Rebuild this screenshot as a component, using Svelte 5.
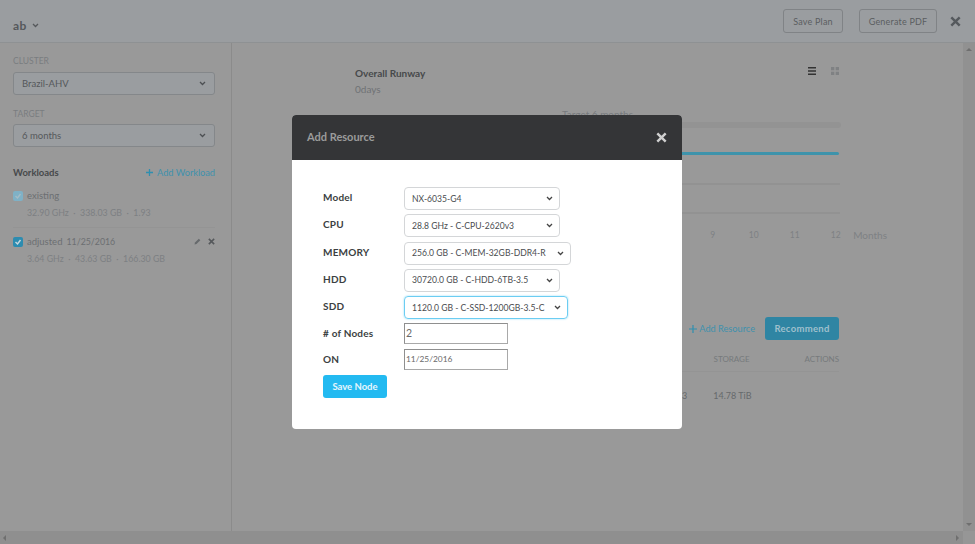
<script>
  const fields = [
    { label: "Model", value: "NX-6035-G4", width: 156 },
    { label: "CPU", value: "28.8 GHz - C-CPU-2620v3", width: 156 },
    { label: "MEMORY", value: "256.0 GB - C-MEM-32GB-DDR4-R", width: 167 },
    { label: "HDD", value: "30720.0 GB - C-HDD-6TB-3.5", width: 156 },
    { label: "SDD", value: "1120.0 GB - C-SSD-1200GB-3.5-C", width: 164, focus: true },
  ];
  const months = [9, 10, 11, 12];
</script>

{#snippet chevron(color)}
  <svg class="chevron" width="7" height="5" viewBox="0 0 7 5">
    <path d="M1 1l2.5 2.5L6 1" fill="none" stroke={color} stroke-width="1.3" />
  </svg>
{/snippet}

{#snippet cross(size, color)}
  <svg width={size} height={size} viewBox="0 0 10 10">
    <path d="M1.2 1.2l7.6 7.6M8.8 1.2L1.2 8.8" fill="none" stroke={color} stroke-width="2.2" />
  </svg>
{/snippet}

<div class="page">
  <div class="window">
    <header class="topbar">
      <div class="plan-name">ab {@render chevron("#55585b")}</div>
      <div class="top-actions">
        <button class="ghost save-plan">Save Plan</button>
        <button class="ghost pdf">Generate PDF</button>
        {@render cross(11, "#55595d")}
      </div>
    </header>

    <div class="body">
      <aside class="sidebar">
        <div class="caption">CLUSTER</div>
        <div class="side-select">Brazil-AHV {@render chevron("#4d5053")}</div>
        <div class="caption second">TARGET</div>
        <div class="side-select">6 months {@render chevron("#4d5053")}</div>

        <div class="workloads-head">
          <span class="workloads-title">Workloads</span>
          <span class="link">
            <svg width="7" height="7" viewBox="0 0 7 7"><path d="M3.5 0v7M0 3.5h7" stroke="#2f8fb0" stroke-width="1.3" /></svg>
            Add Workload
          </span>
        </div>

        <div class="workload first">
          <div class="workload-title">
            <span class="check light">
              <svg width="8" height="8" viewBox="0 0 8 8"><path d="M1.5 4l2 2 3-4" fill="none" stroke="#a5bcc6" stroke-width="1.4" /></svg>
            </span>
            <span>existing</span>
          </div>
          <div class="stats">32.90 GHz &nbsp;·&nbsp; 338.03 GB &nbsp;·&nbsp; 1.93</div>
        </div>
        <div class="workload">
          <div class="workload-title">
            <span class="check">
              <svg width="8" height="8" viewBox="0 0 8 8"><path d="M1.5 4l2 2 3-4" fill="none" stroke="#c9d8de" stroke-width="1.4" /></svg>
            </span>
            <span>adjusted</span>
            <span class="workload-date">11/25/2016</span>
            <span class="row-icons">
              <svg width="7" height="7" viewBox="0 0 7 7"><path d="M0.5 6.5l.5-2L4.8.7l1.5 1.5L2.5 6z" fill="#66696c" /></svg>
              {@render cross(7, "#55585b")}
            </span>
          </div>
          <div class="stats">3.64 GHz &nbsp;·&nbsp; 43.63 GB &nbsp;·&nbsp; 166.30 GB</div>
        </div>
      </aside>

      <main class="content">
        <div class="overview">
          <div>
            <div class="runway-title">Overall Runway</div>
            <div class="runway-value">0days</div>
          </div>
          <div class="view-toggle">
            <svg width="8" height="8" viewBox="0 0 8 8"><path d="M0 0h8v1.6H0zM0 3.2h8v1.6H0zM0 6.4h8V8H0z" fill="#333" /></svg>
            <svg width="8" height="8" viewBox="0 0 8 8"><path d="M0 0h3.3v3.3H0zM4.7 0H8v3.3H4.7zM0 4.7h3.3V8H0zM4.7 4.7H8V8H4.7z" fill="#7f8183" /></svg>
          </div>
        </div>

        <div class="chart">
          <div class="chart-target">Target 6 months</div>
          <div class="band"></div>
          <div class="teal"></div>
          <div class="grid-line"></div>
          <div class="grid-line"></div>
          <div class="axis">
            {#each months as m}<span class="tick">{m}</span>{/each}
            <span class="axis-unit">Months</span>
          </div>
        </div>

        <div class="table-actions">
          <span class="link add-resource">
            <svg width="8" height="8" viewBox="0 0 8 8"><path d="M4 0v8M0 4h8" stroke="#2f8fb0" stroke-width="1.2" /></svg>
            Add Resource
          </span>
          <button class="recommend">Recommend</button>
        </div>
        <div class="table-head"><span class="col-storage">STORAGE</span><span>ACTIONS</span></div>
        <div class="table-row"><span>3</span><span>14.78 TiB</span></div>
      </main>

      <div class="v-scroll">
        <span class="arrow up"></span>
        <span class="arrow down"></span>
      </div>
    </div>

    <div class="h-scroll">
      <div class="h-track">
        <span class="arrow left"></span>
        <span class="arrow right"></span>
      </div>
      <div class="corner"></div>
    </div>
  </div>

  <div class="modal">
    <div class="modal-head">
      <span class="modal-title">Add Resource</span>
      {@render cross(11, "#cfcfcf")}
    </div>
    <div class="modal-body">
      {#each fields as field}
        <div class="field">
          <span class="field-label">{field.label}</span>
          <div class="select" class:focus={field.focus} style="width: {field.width}px">
            <span>{field.value}</span>
            {@render chevron("#444")}
          </div>
        </div>
      {/each}
      <div class="field plain">
        <span class="field-label">&#35; of Nodes</span>
        <input value="2" readonly />
      </div>
      <div class="field plain">
        <span class="field-label">ON</span>
        <input class="date" value="11/25/2016" readonly />
      </div>
      <button class="save-node">Save Node</button>
    </div>
  </div>
</div>

<style>
  :global(body) {
    margin: 0;
    background: #999;
  }

  .page {
    position: relative;
    width: 975px;
    height: 544px;
    overflow: hidden;
    font-family: Lato, "Open Sans", sans-serif;
    font-size: 10px;
    color: #6e7174;
  }

  .window {
    display: flex;
    flex-direction: column;
    height: 100%;
  }

  .topbar {
    flex: none;
    display: flex;
    align-items: center;
    justify-content: space-between;
    height: 43px;
    padding: 0 14px 0 13px;
    box-sizing: border-box;
    background: #9a9da0;
    border-bottom: 1px solid #8e9193;
  }

  .plan-name {
    display: flex;
    align-items: center;
    gap: 5px;
    margin-top: 9px;
    font-size: 12px;
    font-weight: 700;
    letter-spacing: 0.3px;
    color: #55585b;
  }

  .top-actions {
    display: flex;
    align-items: center;
  }

  .ghost {
    height: 24px;
    padding: 0;
    background: transparent;
    border: 1px solid #808386;
    border-radius: 3px;
    font: inherit;
    font-size: 9px;
    letter-spacing: 0.2px;
    color: #5b5e61;
  }

  .save-plan {
    width: 60px;
    margin-right: 16px;
  }

  .pdf {
    width: 78px;
    margin-right: 13px;
  }

  .body {
    flex: 1;
    display: flex;
    min-height: 0;
  }

  .sidebar {
    flex: none;
    width: 232px;
    box-sizing: border-box;
    padding: 13px 16px 0 13px;
    border-right: 1px solid #8b8b8b;
  }

  .caption {
    font-size: 8.5px;
    line-height: 10px;
    color: #7a7d80;
    margin-bottom: 6px;
  }

  .caption.second {
    margin-top: 14px;
    margin-bottom: 5px;
  }

  .side-select {
    display: flex;
    align-items: center;
    justify-content: space-between;
    height: 23px;
    padding: 0 8px;
    box-sizing: border-box;
    background: #9a9da0;
    border: 1px solid #84878a;
    border-radius: 3px;
    font-size: 9.5px;
    color: #55585b;
  }

  .workloads-head {
    display: flex;
    align-items: center;
    justify-content: space-between;
    margin-top: 20px;
  }

  .workloads-title {
    font-size: 9.5px;
    font-weight: 700;
    color: #47494b;
  }

  .link {
    display: inline-flex;
    align-items: center;
    gap: 4px;
    font-size: 9.2px;
    color: #3f91ad;
  }

  .workload {
    padding: 8px 0 10px;
  }

  .workload.first {
    margin-top: 4px;
    padding-bottom: 9px;
    border-bottom: 1px solid #949494;
  }

  .workload-title {
    display: flex;
    align-items: center;
    font-size: 9.5px;
    color: #6c6f72;
  }

  .workload-date {
    margin-left: 4px;
    font-size: 8.8px;
  }

  .check {
    display: flex;
    align-items: center;
    justify-content: center;
    width: 10px;
    height: 10px;
    margin-right: 4px;
    border-radius: 2px;
    background: #2d8cb0;
  }

  .check.light {
    background: #7fb1c6;
  }

  .row-icons {
    display: flex;
    align-items: center;
    gap: 7px;
    margin-left: auto;
  }

  .stats {
    margin: 6px 0 0 14px;
    font-size: 8.8px;
    color: #7d8083;
  }

  .content {
    flex: 1;
    min-width: 0;
    box-sizing: border-box;
    padding: 0 124px;
    background: #999;
  }

  .overview {
    display: flex;
    justify-content: space-between;
    padding-top: 24px;
  }

  .runway-title {
    margin-left: -1px;
    font-size: 10px;
    font-weight: 700;
    color: #47494b;
  }

  .runway-value {
    margin-top: 4px;
    margin-left: -1px;
    font-size: 10px;
    color: #6f7275;
  }

  .view-toggle {
    display: flex;
    gap: 15px;
    height: 10px;
  }

  .chart {
    margin-top: 14px;
    padding-left: 206px;
  }

  .chart-target {
    font-size: 10px;
    line-height: 11px;
    color: #777a7d;
  }

  .band {
    height: 6px;
    margin: 2px -2px 0 0;
    border-radius: 3px;
    background: #939393;
  }

  .teal {
    height: 3px;
    margin-top: 24px;
    border-radius: 2px;
    background: #3e93ab;
  }

  .grid-line {
    height: 2px;
    margin: 27px -1px 0 0;
    background: #929292;
  }

  .teal + .grid-line {
    margin-top: 28px;
  }

  .axis {
    display: flex;
    align-items: center;
    justify-content: flex-end;
    margin-top: 14px;
    margin-right: -48px;
    line-height: 14px;
    color: #7e8184;
  }

  .tick {
    width: 41px;
    text-align: center;
    font-size: 8.5px;
    transform: translateX(14px);
  }

  .axis-unit {
    margin-left: 11px;
    font-size: 10px;
  }

  .table-actions {
    display: flex;
    align-items: center;
    justify-content: flex-end;
    margin-top: 75px;
  }

  .add-resource {
    margin-right: 10px;
    gap: 2px;
  }

  .recommend {
    width: 74px;
    height: 23px;
    padding: 0;
    border: 0;
    border-radius: 3px;
    background: #2f85a3;
    font: inherit;
    font-size: 9.5px;
    font-weight: 700;
    letter-spacing: 0.3px;
    color: #9fc0cd;
  }

  .table-head {
    display: flex;
    justify-content: flex-end;
    height: 32px;
    margin-left: 200px;
    padding-top: 14px;
    box-sizing: border-box;
    border-bottom: 1px solid #949494;
    font-size: 8px;
    color: #76797c;
  }

  .col-storage {
    margin-right: 55px;
  }

  .table-row {
    display: flex;
    gap: 26px;
    padding: 18px 0 0 326px;
    font-size: 9px;
    color: #66696c;
  }

  .v-scroll {
    flex: none;
    display: flex;
    flex-direction: column;
    justify-content: space-between;
    align-items: center;
    width: 12px;
    box-sizing: border-box;
    padding: 5px 0;
    background: #919191;
  }

  .h-scroll {
    flex: none;
    display: flex;
    height: 13px;
  }

  .h-track {
    flex: 1;
    display: flex;
    justify-content: space-between;
    align-items: center;
    padding: 0 4px 0 3px;
    background: #8f8f8f;
  }

  .corner {
    width: 12px;
    background: #969696;
  }

  .arrow {
    width: 0;
    height: 0;
    border: 3px solid transparent;
  }

  .arrow.up {
    border-top: 0;
    border-bottom-color: #6f6f6f;
  }

  .arrow.down {
    border-bottom: 0;
    border-top-color: #6f6f6f;
  }

  .arrow.left {
    border-left: 0;
    border-right-color: #6f6f6f;
  }

  .arrow.right {
    border-right: 0;
    border-left-color: #6f6f6f;
  }

  .modal {
    position: absolute;
    left: 292px;
    top: 115px;
    width: 390px;
    height: 314px;
    border-radius: 4px;
    overflow: hidden;
    background: #fff;
    color: #333;
  }

  .modal-head {
    display: flex;
    align-items: center;
    justify-content: space-between;
    height: 45px;
    padding: 0 15px;
    box-sizing: border-box;
    background: #343537;
    font-size: 11px;
    font-weight: 700;
    color: #9b9b9b;
  }

  .modal-title {
    margin-top: -3px;
  }

  .modal-body {
    padding: 27px 0 0 31px;
  }

  .field {
    display: flex;
    align-items: center;
    height: 23px;
    margin-bottom: 4.3px;
  }

  .field.plain {
    height: 20px;
    margin-bottom: 6px;
  }

  .field-label {
    flex: none;
    width: 81px;
    margin-top: -3px;
    font-size: 10px;
    font-weight: 700;
    letter-spacing: 0.2px;
    color: #3c3f42;
  }

  .field.plain .field-label {
    margin-top: -1px;
  }

  .select {
    display: flex;
    align-items: center;
    justify-content: space-between;
    height: 23px;
    padding: 0 6px 0 7px;
    box-sizing: border-box;
    border: 1px solid #d4d6d8;
    border-radius: 4px;
    font-size: 8.6px;
    color: #4a4d50;
    white-space: nowrap;
  }

  .select.focus {
    border-color: #6ccdf2;
    box-shadow: 0 0 2px #8ad8f5;
  }

  input {
    width: 104px;
    height: 21px;
    padding: 0 1px;
    box-sizing: border-box;
    border: 1px solid #a9a9a9;
    border-top-color: #8f8f8f;
    border-left-color: #8f8f8f;
    font: inherit;
    font-size: 10.5px;
    color: #6a6a6a;
    outline: none;
  }

  input.date {
    font-size: 8.4px;
  }

  .save-node {
    display: block;
    width: 64px;
    height: 23px;
    margin-top: 5px;
    padding: 0;
    border: 0;
    border-radius: 3px;
    background: #23baf1;
    font: inherit;
    font-size: 9.5px;
    font-weight: 700;
    color: #e6f6fd;
  }

  .chevron {
    flex: none;
  }
</style>
